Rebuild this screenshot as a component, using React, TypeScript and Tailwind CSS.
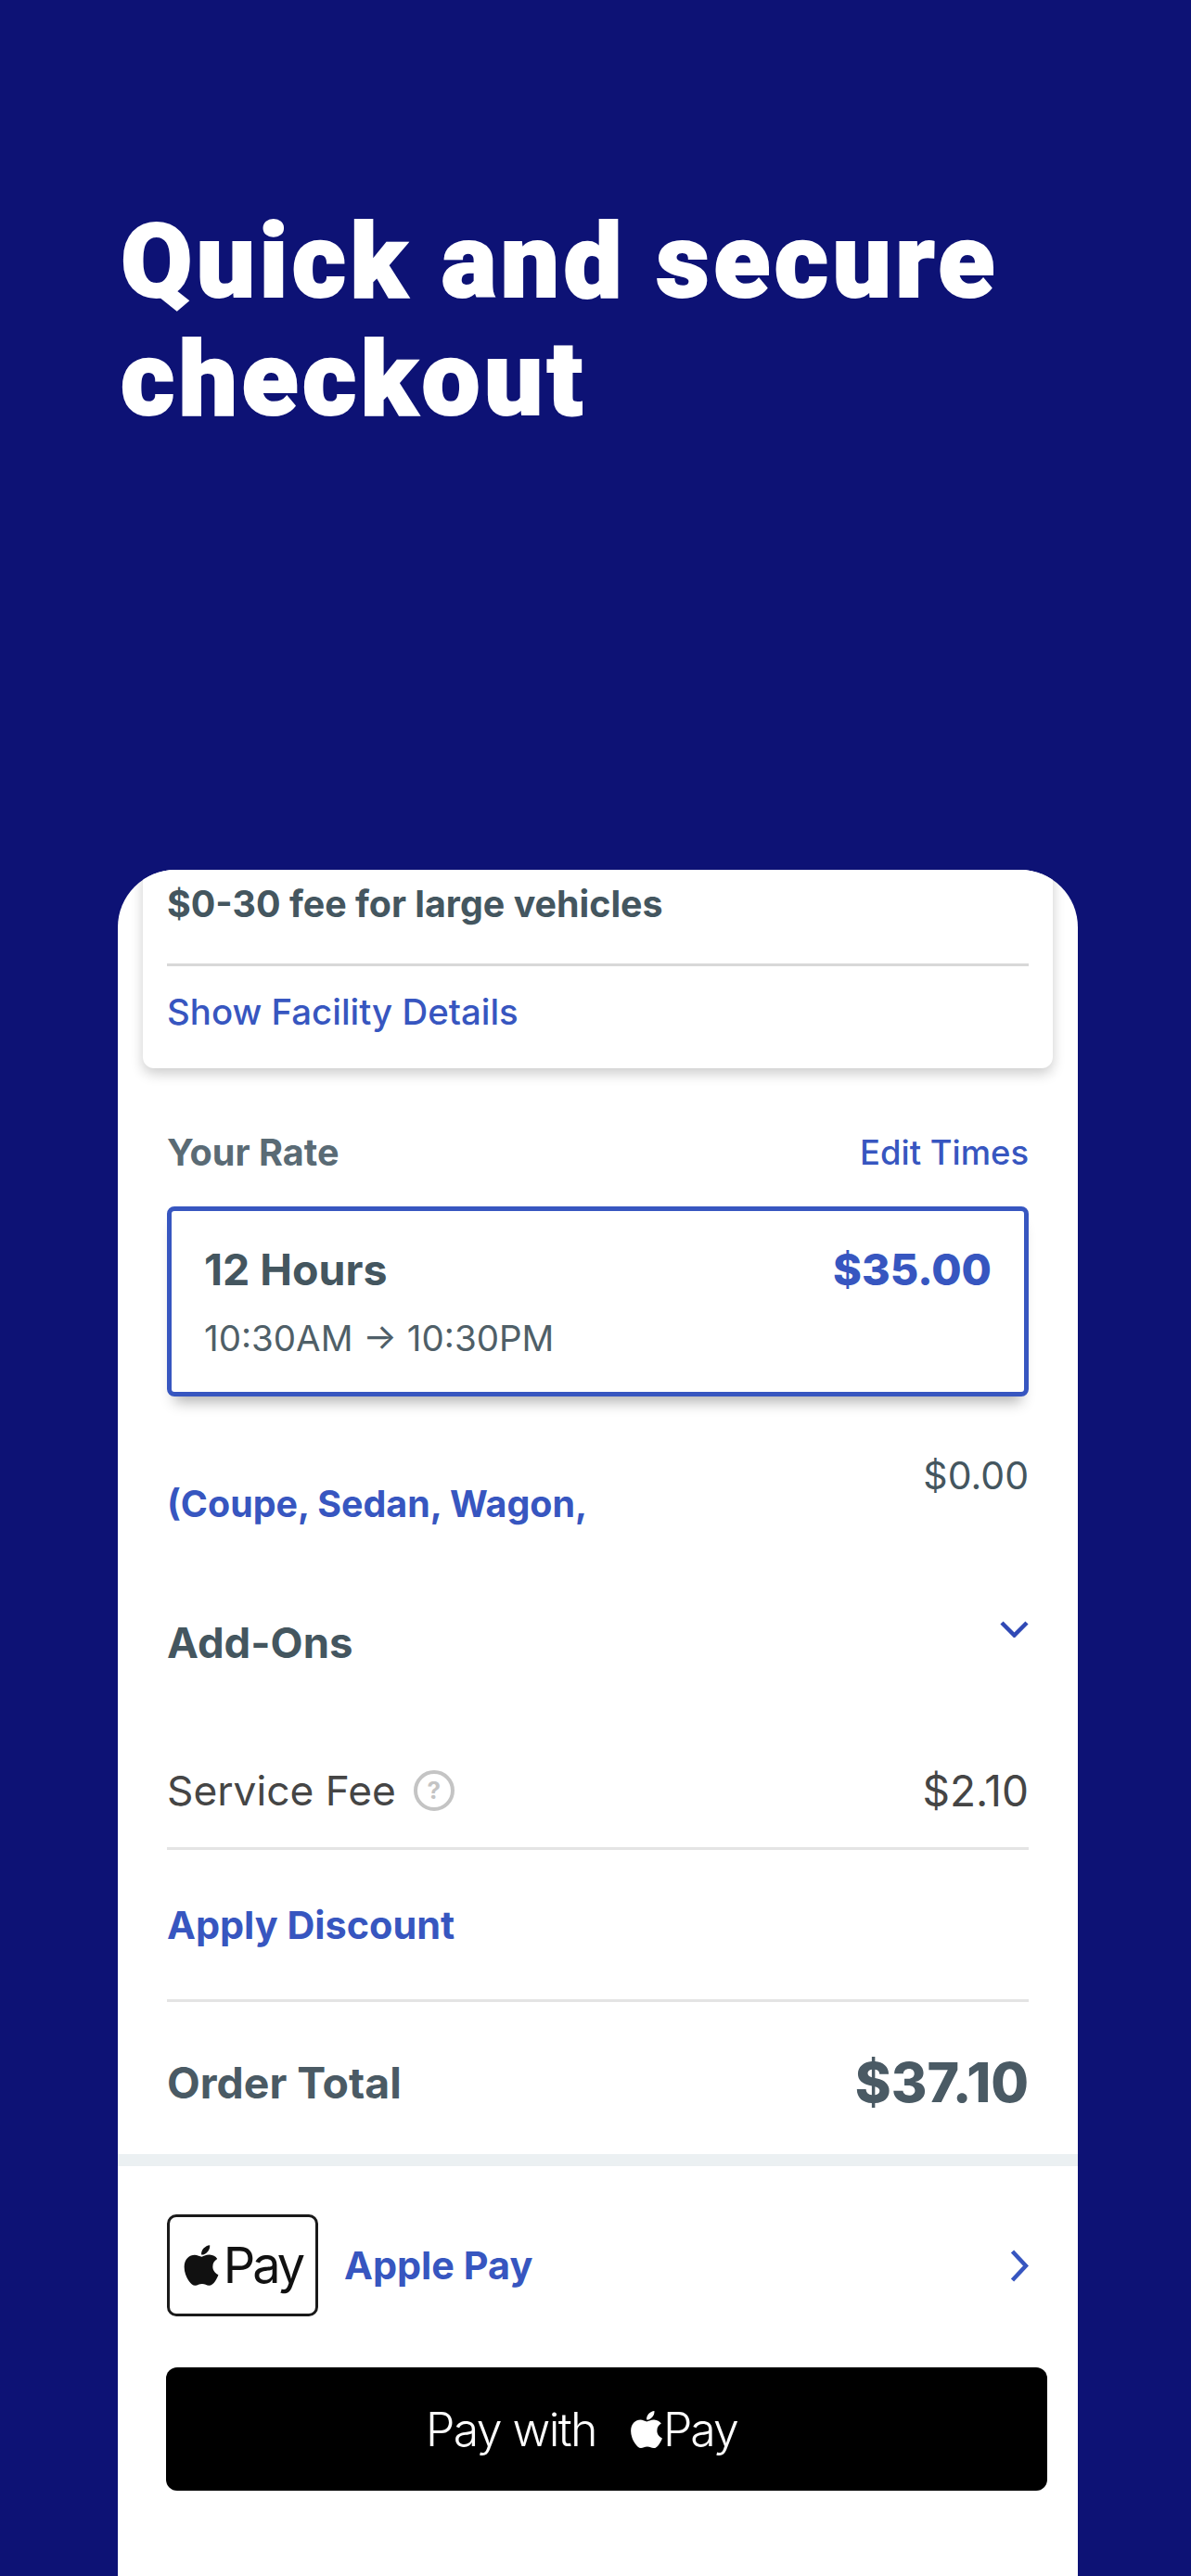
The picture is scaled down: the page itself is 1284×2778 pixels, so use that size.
import { FaApple } from "react-icons/fa";

export default function App() {
  return (
    <div className="w-[1284px] h-[2778px] bg-[#0d1275] overflow-hidden flex flex-col font-['Inter',sans-serif]">
      <h1 className="ml-[130px] mt-[218px] h-[252px] text-[112px] leading-[127px] font-black tracking-[4.5px] [-webkit-text-stroke:2px_white] text-white font-['Roboto',sans-serif]">
        Quick and secure
        <br />
        checkout
      </h1>
      <div className="ml-[127px] mt-[468px] w-[1035px] h-[1840px] bg-white rounded-t-[62px] overflow-hidden flex flex-col">
        <div className="mx-[27px] h-[214px] px-[26px] bg-white rounded-b-[12px] shadow-[0_6px_14px_rgba(0,0,0,0.2)] flex flex-col shrink-0">
          <div className="h-[101px] pt-[14px] text-[39.4px] leading-[46px] font-bold text-[#44565f]">
            $0-30 fee for large vehicles
          </div>
          <div className="h-[3px] bg-[#d8d8d8]" />
          <div className="pt-[26px] text-[38.4px] leading-[46px] font-medium text-[#3756c0]">
            Show Facility Details
          </div>
        </div>

        <div className="mx-[53px] mt-[68px] h-[46px] flex justify-between items-center shrink-0">
          <span className="text-[39.6px] leading-[46px] font-bold text-[#5a6b75]">Your Rate</span>
          <span className="text-[36.4px] leading-[46px] font-medium text-[#3756c0]">Edit Times</span>
        </div>

        <div className="mx-[53px] mt-[35px] h-[205px] border-[5px] border-[#3756c0] rounded-[8px] shadow-[0_14px_14px_-8px_rgba(0,0,0,0.3)] px-[35px] pt-[32px] shrink-0">
          <div className="flex justify-between items-center h-[62px]">
            <span className="text-[46.5px] leading-[62px] font-bold text-[#44565f]">12 Hours</span>
            <span className="text-[46.8px] leading-[62px] font-extrabold text-[#3756c0]">$35.00</span>
          </div>
          <div className="mt-[19px] text-[38.5px] leading-[48px] text-[#4f5f68]">10:30AM → 10:30PM</div>
        </div>

        <div className="mx-[53px] mt-[61px] h-[90px] flex justify-between shrink-0">
          <span className="mt-[32px] text-[39.4px] leading-[46px] font-bold text-[#3756c0]">
            (Coupe, Sedan, Wagon,
          </span>
          <span className="text-[41px] leading-[48px] text-[#44565f]">$0.00</span>
        </div>

        <div className="mx-[53px] mt-[81px] h-[64px] flex justify-between shrink-0">
          <span className="pt-[6px] text-[45.5px] leading-[56px] font-bold text-[#44565f]">Add-Ons</span>
          <svg width="31" height="18" viewBox="0 0 31 18" fill="none" className="mt-[10px]">
            <path d="M2 2 L15.5 15.5 L29 2" stroke="#3049b5" strokeWidth="4.5" />
          </svg>
        </div>

        <div className="mx-[53px] mt-[101px] h-[56px] flex justify-between items-center shrink-0">
          <div className="flex items-center gap-[19px]">
            <span className="text-[44.3px] leading-[56px] text-[#454545]">Service Fee</span>
            <span className="w-[44px] h-[44px] rounded-full border-[4px] border-[#c4c4c4] flex items-center justify-center text-[26px] leading-none font-bold text-[#c4c4c4]">
              ?
            </span>
          </div>
          <span className="text-[46px] leading-[56px] text-[#454545]">$2.10</span>
        </div>

        <div className="mx-[53px] mt-[33px] h-[3px] bg-[#e4e4e4] shrink-0" />

        <div className="mx-[53px] mt-[53px] h-[56px] text-[41.4px] leading-[56px] font-bold text-[#3756c0] shrink-0">
          Apply Discount
        </div>

        <div className="mx-[53px] mt-[52px] h-[3px] bg-[#e4e4e4] shrink-0" />

        <div className="mx-[53px] mt-[52px] h-[70px] flex justify-between items-center shrink-0">
          <span className="text-[46.4px] leading-[70px] font-bold text-[#4a5a64]">Order Total</span>
          <span className="text-[59px] leading-[70px] font-extrabold text-[#4a5a64]">$37.10</span>
        </div>

        <div className="mt-[42px] h-[13px] bg-[#ebf0f2] shrink-0" />

        <div className="ml-[53px] mr-[53px] mt-[52px] h-[110px] flex items-center shrink-0">
          <div className="w-[163px] h-[110px] border-[3px] border-[#1a1a1a] rounded-[10px] flex items-center justify-center gap-[4px]">
            <FaApple className="text-[#111] w-[40px] h-[50px]" />
            <span className="text-[54px] leading-none tracking-[-3px] text-[#111]">Pay</span>
          </div>
          <span className="ml-[28px] text-[41.4px] leading-[56px] font-bold text-[#3756c0]">Apple Pay</span>
          <svg width="20" height="35" viewBox="0 0 20 35" fill="none" className="ml-auto">
            <path d="M2.5 2 L17 17.5 L2.5 33" stroke="#3756c0" strokeWidth="4.5" />
          </svg>
        </div>

        <div className="ml-[52px] mt-[55px] w-[950px] h-[133px] bg-black rounded-[12px] flex items-center pl-[280px] text-white shrink-0">
          <span className="text-[50px] leading-none font-light tracking-[-1.6px]">Pay with</span>
          <FaApple className="ml-[36px] w-[36px] h-[46px]" />
          <span className="text-[50px] leading-none font-light tracking-[-2px]">Pay</span>
        </div>
      </div>
    </div>
  );
}
